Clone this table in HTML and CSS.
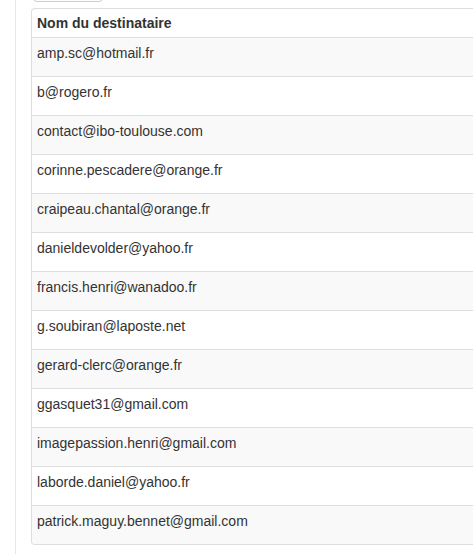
FILE: index.html
```html
<!DOCTYPE html>
<html lang="fr">
<head>
<meta charset="utf-8">
<title>Destinataires</title>
<link rel="stylesheet" href="styles.css">
</head>
<body>
<div class="page">
  <div class="rail">
    <div class="btn-stub"></div>
    <div class="card">
      <div class="row head">Nom du destinataire</div>
      <div class="row odd">amp.sc@hotmail.fr</div>
      <div class="row">b@rogero.fr</div>
      <div class="row odd">contact@ibo-toulouse.com</div>
      <div class="row">corinne.pescadere@orange.fr</div>
      <div class="row odd">craipeau.chantal@orange.fr</div>
      <div class="row">danieldevolder@yahoo.fr</div>
      <div class="row odd">francis.henri@wanadoo.fr</div>
      <div class="row">g.soubiran@laposte.net</div>
      <div class="row odd">gerard-clerc@orange.fr</div>
      <div class="row">ggasquet31@gmail.com</div>
      <div class="row odd">imagepassion.henri@gmail.com</div>
      <div class="row">laborde.daniel@yahoo.fr</div>
      <div class="row odd">patrick.maguy.bennet@gmail.com</div>
    </div>
  </div>
</div>
</body>
</html>
```
FILE: styles.css
```css
html, body {
  margin: 0;
  padding: 0;
  background: #fff;
  overflow: hidden;
}
body {
  font-family: "Liberation Sans", Arial, sans-serif;
  font-size: 14px;
  color: #333;
}
.page {
  display: flow-root;
  padding-left: 15px;
  height: 554px;
}
.rail {
  display: flow-root;
  border-left: 1px solid #e6e6e6;
  height: 100%;
  padding-left: 15px;
}
.btn-stub {
  width: 68px;
  height: 30px;
  margin-top: -30px;
  margin-left: 2px;
  border: 1px solid #ccc;
  border-radius: 4px;
  background: #fff;
}
.card {
  margin-top: 6px;
  border: 1px solid #ddd;
  border-right: none;
  border-radius: 4px 0 0 4px;
  overflow: hidden;
}
.row {
  box-sizing: border-box;
  height: 39px;
  padding: 5px 5px 0 5px;
  line-height: 20px;
  border-top: 1px solid #ddd;
}
.row.head {
  border-top: none;
  height: 29px;
  padding-top: 4px;
  font-weight: bold;
  border-bottom: 1px solid #ddd;
}
.row.head + .row {
  border-top: none;
  height: 38px;
}
.row.odd {
  background: #f9f9f9;
}
```
